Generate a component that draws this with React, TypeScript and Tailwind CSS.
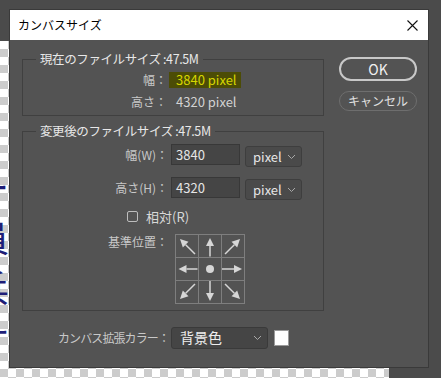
import type { ReactNode } from "react";

const arrows: [number, number, number, number][] = [
  // [shaft start x, y, tip x, y]
  [20, 20, 5, 5],
  [35, 22.5, 35, 4],
  [50, 20, 65, 5],
  [22.5, 35, 3.5, 35],
  [47, 35, 67, 35],
  [20, 50, 5, 65],
  [35, 47, 35, 67],
  [50, 50, 65, 65],
];

const Arrow = ({ sx, sy, tx, ty }: { sx: number; sy: number; tx: number; ty: number }) => {
  const len = Math.hypot(tx - sx, ty - sy);
  const ux = (tx - sx) / len;
  const uy = (ty - sy) / len;
  const bx = tx - ux * 8;
  const by = ty - uy * 8;
  const px = -uy * 4;
  const py = ux * 4;
  return (
    <g>
      <line x1={sx} y1={sy} x2={bx} y2={by} stroke="#d6d6d6" strokeWidth="1.5" />
      <polygon points={`${tx},${ty} ${bx + px},${by + py} ${bx - px},${by - py}`} fill="#d6d6d6" />
    </g>
  );
};

const AnchorGrid = () => (
  <svg width="70" height="70" viewBox="0 0 70 70">
    <rect x="0.5" y="0.5" width="69" height="69" fill="none" stroke="#7e7e7e" />
    <line x1="23.5" y1="0" x2="23.5" y2="70" stroke="#7e7e7e" />
    <line x1="46.5" y1="0" x2="46.5" y2="70" stroke="#7e7e7e" />
    <line x1="0" y1="23.5" x2="70" y2="23.5" stroke="#7e7e7e" />
    <line x1="0" y1="46.5" x2="70" y2="46.5" stroke="#7e7e7e" />
    {arrows.map(([sx, sy, tx, ty], i) => (
      <Arrow key={i} sx={sx} sy={sy} tx={tx} ty={ty} />
    ))}
    <circle cx="35" cy="35" r="4" fill="#d6d6d6" />
  </svg>
);

const Chevron = () => (
  <svg width="9" height="6" viewBox="0 0 9 6">
    <path d="M1 1 L4.5 4.5 L8 1" fill="none" stroke="#a8a8a8" strokeWidth="1" />
  </svg>
);

const Group = ({ title, children, className }: { title: string; children: ReactNode; className?: string }) => (
  <fieldset className={`border border-[#404040] ${className ?? ""}`}>
    <legend className="ml-[13px] px-[4px] text-[12.5px] tracking-[-0.4px] leading-[16px] text-[#e8e8e8]">{title}</legend>
    {children}
  </fieldset>
);

export default function App() {
  return (
    <div className="relative w-[441px] h-[378px] overflow-hidden bg-[#4b4b4b] font-['Noto_Sans_CJK_JP',sans-serif]">
      {/* canvas behind the dialog */}
      <div className="absolute left-0 top-[41px] bottom-0 w-[389px] overflow-hidden bg-[repeating-conic-gradient(#cccccc_0_25%,#ffffff_0_50%)] bg-[length:16px_16px]">
        <div className="absolute left-[-27px] top-[120px] flex flex-col text-[36px] leading-[50px] text-[#1e1e78]">
          <span>ー</span>
          <span>員</span>
          <span>兵</span>
          <span>サ</span>
        </div>
      </div>

      <div className="absolute left-[9px] top-[9px] w-[420px] h-[359px] border border-[#3a3a3a] bg-[#535353] flex flex-col">
        <div className="h-[30px] bg-white flex items-center justify-between pl-[8px] pr-[10px]">
          <span className="text-[12px] text-black">カンバスサイズ</span>
          <svg width="11" height="11" viewBox="0 0 11 11">
            <path d="M0.5 0.5 L10.5 10.5 M10.5 0.5 L0.5 10.5" stroke="#111" strokeWidth="1.1" />
          </svg>
        </div>

        <div className="flex pl-[12px] pt-[11px]">
          <div className="w-[302px] flex flex-col">
            <Group title="現在のファイルサイズ :47.5M" className="pb-[5px]">
              <div className="flex flex-col gap-[6px] pt-[5px] text-[12px] leading-[16px]">
                <div className="flex items-center">
                  <span className="w-[144px] text-right text-[#c8c8c8]">幅：</span>
                  <span className="ml-[2px] w-[72px] h-[16px] bg-[#4c4c06] pl-[7px] text-[13px] text-[#d6d600]">3840 pixel</span>
                </div>
                <div className="flex items-center">
                  <span className="w-[144px] text-right text-[#c8c8c8]">高さ：</span>
                  <span className="ml-[2px] pl-[7px] text-[13px] text-[#d2d2d2]">4320 pixel</span>
                </div>
              </div>
            </Group>

            <Group title="変更後のファイルサイズ :47.5M" className="mt-[7px] pb-[6px]">
              <div className="flex flex-col pt-[5px] text-[12px]">
                {[
                  ["幅(W)：", "3840"],
                  ["高さ(H)：", "4320"],
                ].map(([label, value], i) => (
                  <div key={label} className={`flex items-start ${i ? "mt-[10px]" : ""}`}>
                    <span className="w-[145px] h-[21px] leading-[21px] text-right text-[#c8c8c8]">{label}</span>
                    <div className="ml-[3px] w-[69px] h-[21px] bg-[#454545] border border-[#383838] pl-[4px] leading-[19px] text-[#e6e6e6] text-[13px]">
                      {value}
                    </div>
                    <div className="ml-[5px] mt-[2px] w-[57px] h-[21px] rounded-[3px] bg-[#4a4a4a] border border-[#3e3e3e] flex items-center justify-between pl-[7px] pr-[5px] text-[13px] text-[#e6e6e6]">
                      <span>pixel</span>
                      <Chevron />
                    </div>
                  </div>
                ))}
                <div className="flex items-center mt-[7px] ml-[104px]">
                  <span className="w-[11px] h-[11px] rounded-[2px] border border-[#bdbdbd]" />
                  <span className="ml-[8px] text-[13px] text-[#d8d8d8]">相対(R)</span>
                </div>
                <div className="flex items-start mt-[7px]">
                  <span className="w-[145px] text-right text-[#c8c8c8] leading-[16px]">基準位置：</span>
                  <div className="ml-[7px]">
                    <AnchorGrid />
                  </div>
                </div>
              </div>
            </Group>

            <div className="flex items-center mt-[16px] text-[12px]">
              <span className="w-[147px] text-right tracking-[-0.9px] text-[#c8c8c8]">カンバス拡張カラー：</span>
              <div className="ml-[2px] w-[97px] h-[22px] rounded-[3px] bg-[#454545] border border-[#3a3a3a] flex items-center justify-between pl-[8px] pr-[5px] text-[14px] text-[#eeeeee]">
                <span>背景色</span>
                <Chevron />
              </div>
              <span className="ml-[6px] w-[15px] h-[16px] bg-white border border-[#9a9a9a]" />
            </div>
          </div>

          <div className="ml-[15px] mt-[6px] w-[78px] flex flex-col">
            <button className="h-[24px] rounded-full border-2 border-[#c8c8c8] text-[14px] text-[#f0f0f0]">OK</button>
            <button className="mt-[10px] h-[20px] rounded-full border border-[#6e6e6e] text-[12px] leading-[18px] text-[#e0e0e0]">
              キャンセル
            </button>
          </div>
        </div>
      </div>
    </div>
  );
}
